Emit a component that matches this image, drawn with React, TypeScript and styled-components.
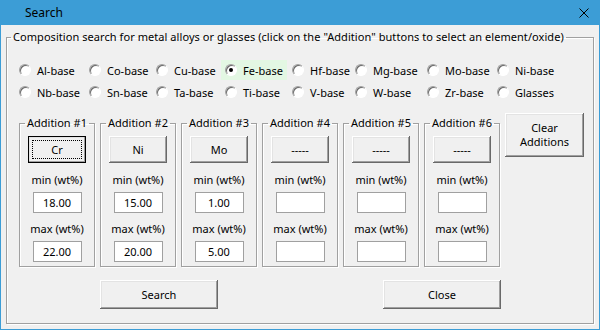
import React, { useState } from 'react';
import styled, { createGlobalStyle } from 'styled-components';

const GlobalStyle = createGlobalStyle`
  html, body {
    margin: 0;
    padding: 0;
    background: #ffffff;
  }
  * {
    box-sizing: border-box;
  }
`;

const ACCENT = '#3c9dd6';
const FONT = `"Noto Sans", "Open Sans", sans-serif`;

const BASES = [
  'Al-base', 'Co-base', 'Cu-base', 'Fe-base', 'Hf-base', 'Mg-base', 'Mo-base', 'Ni-base',
  'Nb-base', 'Sn-base', 'Ta-base', 'Ti-base', 'V-base', 'W-base', 'Zr-base', 'Glasses',
];

const ADDITIONS = [
  { element: 'Cr', min: '18.00', max: '22.00' },
  { element: 'Ni', min: '15.00', max: '20.00' },
  { element: 'Mo', min: '1.00', max: '5.00' },
  { element: '-----', min: '', max: '' },
  { element: '-----', min: '', max: '' },
  { element: '-----', min: '', max: '' },
];

function App() {
  const [base, setBase] = useState('Fe-base');
  const [focused, setFocused] = useState(0);

  return (
    <>
      <GlobalStyle />
      <Window>
        <TitleBar>
          <Title>Search</Title>
          <CloseIcon viewBox="0 0 10 10">
            <path d="M0.5 0.5 L9.5 9.5 M9.5 0.5 L0.5 9.5" />
          </CloseIcon>
        </TitleBar>
        <Body>
          <Frame>
            <Caption>
              Composition search for metal alloys or glasses (click on the "Addition" buttons to
              select an element/oxide)
            </Caption>
            <RadioGrid>
              {BASES.map((b) => (
                <RadioOption key={b} $active={b === base} onClick={() => setBase(b)}>
                  <RadioCircle $checked={b === base} />
                  <span>{b}</span>
                </RadioOption>
              ))}
            </RadioGrid>
            <AdditionRow>
              {ADDITIONS.map((a, i) => (
                <AdditionGroup key={i}>
                  <GroupCaption>Addition #{i + 1}</GroupCaption>
                  <ElementButton $focused={focused === i} onClick={() => setFocused(i)}>
                    <span>{a.element}</span>
                  </ElementButton>
                  <FieldLabel>min (wt%)</FieldLabel>
                  <NumberBox defaultValue={a.min} />
                  <FieldLabel $gap={9}>max (wt%)</FieldLabel>
                  <NumberBox defaultValue={a.max} />
                </AdditionGroup>
              ))}
              <ClearButton>
                Clear
                <br />
                Additions
              </ClearButton>
            </AdditionRow>
            <ActionRow>
              <ActionButton>Search</ActionButton>
              <ActionButton>Close</ActionButton>
            </ActionRow>
          </Frame>
        </Body>
      </Window>
    </>
  );
}

const Window = styled.div`
  width: 600px;
  height: 330px;
  display: flex;
  flex-direction: column;
  border: 1px solid ${ACCENT};
  border-top: none;
  background: #f0f0f0;
  font-family: ${FONT};
  font-size: 11px;
  color: #000;
`;

const TitleBar = styled.div`
  height: 25px;
  flex: none;
  display: flex;
  align-items: center;
  justify-content: space-between;
  padding: 0 10px 0 24px;
  background: ${ACCENT};
`;

const Title = styled.span`
  font-size: 12px;
  color: #000;
`;

const CloseIcon = styled.svg`
  width: 10px;
  height: 10px;
  stroke: #000;
  stroke-width: 1;
  fill: none;
`;

const Body = styled.div`
  flex: 1;
  display: flex;
  padding: 5px 5px 5px 5px;
`;

const Frame = styled.fieldset`
  flex: 1;
  margin: 0;
  padding: 0;
  min-width: 0;
  border: 1px solid #a0a0a0;
  box-shadow: inset 1px 1px 0 #ffffff, 1px 1px 0 #ffffff;
`;

const Caption = styled.legend`
  margin-left: 4px;
  padding: 0 2px;
  line-height: 14px;
  letter-spacing: 0.06px;
`;

const RadioGrid = styled.div`
  display: grid;
  grid-template-columns: 70px 67px 69px 67px 63px 72px 70px auto;
  grid-auto-rows: 20px;
  row-gap: 2px;
  margin: 16px 0 0 8px;
`;

const RadioOption = styled.label<{ $active: boolean }>`
  display: flex;
  align-items: center;
  gap: 6px;
  padding: 0 4px;
  justify-self: start;
  white-space: nowrap;
  background: ${(p) => (p.$active ? '#e3f7e3' : 'transparent')};
  cursor: default;
`;

const RadioCircle = styled.span<{ $checked: boolean }>`
  position: relative;
  width: 12px;
  height: 12px;
  flex: none;
  border-radius: 50%;
  border: 1px solid;
  border-color: #a0a0a0 #ffffff #ffffff #a0a0a0;
  background: #ffffff;
  box-shadow: inset 1px 1px 0 #696969;

  &::after {
    content: '';
    display: ${(p) => (p.$checked ? 'block' : 'none')};
    position: absolute;
    left: 3px;
    top: 3px;
    width: 4px;
    height: 4px;
    border-radius: 50%;
    background: #000;
  }
`;

const AdditionRow = styled.div`
  display: flex;
  align-items: flex-start;
  gap: 5px;
  margin-top: 11px;
  padding-left: 12px;
`;

const AdditionGroup = styled.fieldset`
  width: 76px;
  margin: 3px 0 0 0;
  padding: 0 0 4px 0;
  min-width: 0;
  display: flex;
  flex-direction: column;
  align-items: center;
  border: 1px solid #a0a0a0;
  box-shadow: inset 1px 1px 0 #ffffff, 1px 1px 0 #ffffff;
`;

const GroupCaption = styled.legend`
  margin-left: 5px;
  padding: 0 2px;
  line-height: 14px;
  white-space: nowrap;
`;

const raised = `
  background: #f0f0f0;
  border: none;
  font-family: ${FONT};
  font-size: 11px;
  color: #000;
  box-shadow: inset -1px -1px 0 #696969, inset 1px 1px 0 #ffffff,
    inset -2px -2px 0 #a0a0a0, inset 2px 2px 0 #e3e3e3;
`;

const ElementButton = styled.button<{ $focused: boolean }>`
  ${raised}
  width: 58px;
  height: 27px;
  margin-top: 6px;
  padding: 0;
  display: flex;
  align-items: center;
  justify-content: center;
  outline: ${(p) => (p.$focused ? '1px solid #000' : 'none')};
  outline-offset: -1px;
  position: relative;

  &::after {
    content: '';
    display: ${(p) => (p.$focused ? 'block' : 'none')};
    position: absolute;
    inset: 4px;
    border: 1px dotted #000;
  }
`;

const FieldLabel = styled.div<{ $gap?: number }>`
  margin-top: ${(p) => p.$gap ?? 10}px;
  line-height: 14px;
  white-space: nowrap;
`;

const NumberBox = styled.input`
  width: 49px;
  height: 21px;
  margin-top: 5px;
  padding: 0;
  border: 1px solid #a0a0a0;
  background: #ffffff;
  font-family: ${FONT};
  font-size: 11px;
  text-align: center;
  color: #000;
  outline: none;
`;

const ClearButton = styled.button`
  ${raised}
  width: 79px;
  height: 44px;
  padding: 0;
  line-height: 14px;
`;

const ActionRow = styled.div`
  display: flex;
  gap: 165px;
  margin-top: 13px;
  padding-left: 93px;
`;

const ActionButton = styled.button`
  ${raised}
  width: 118px;
  height: 29px;
  padding: 0;
`;

export default App;
